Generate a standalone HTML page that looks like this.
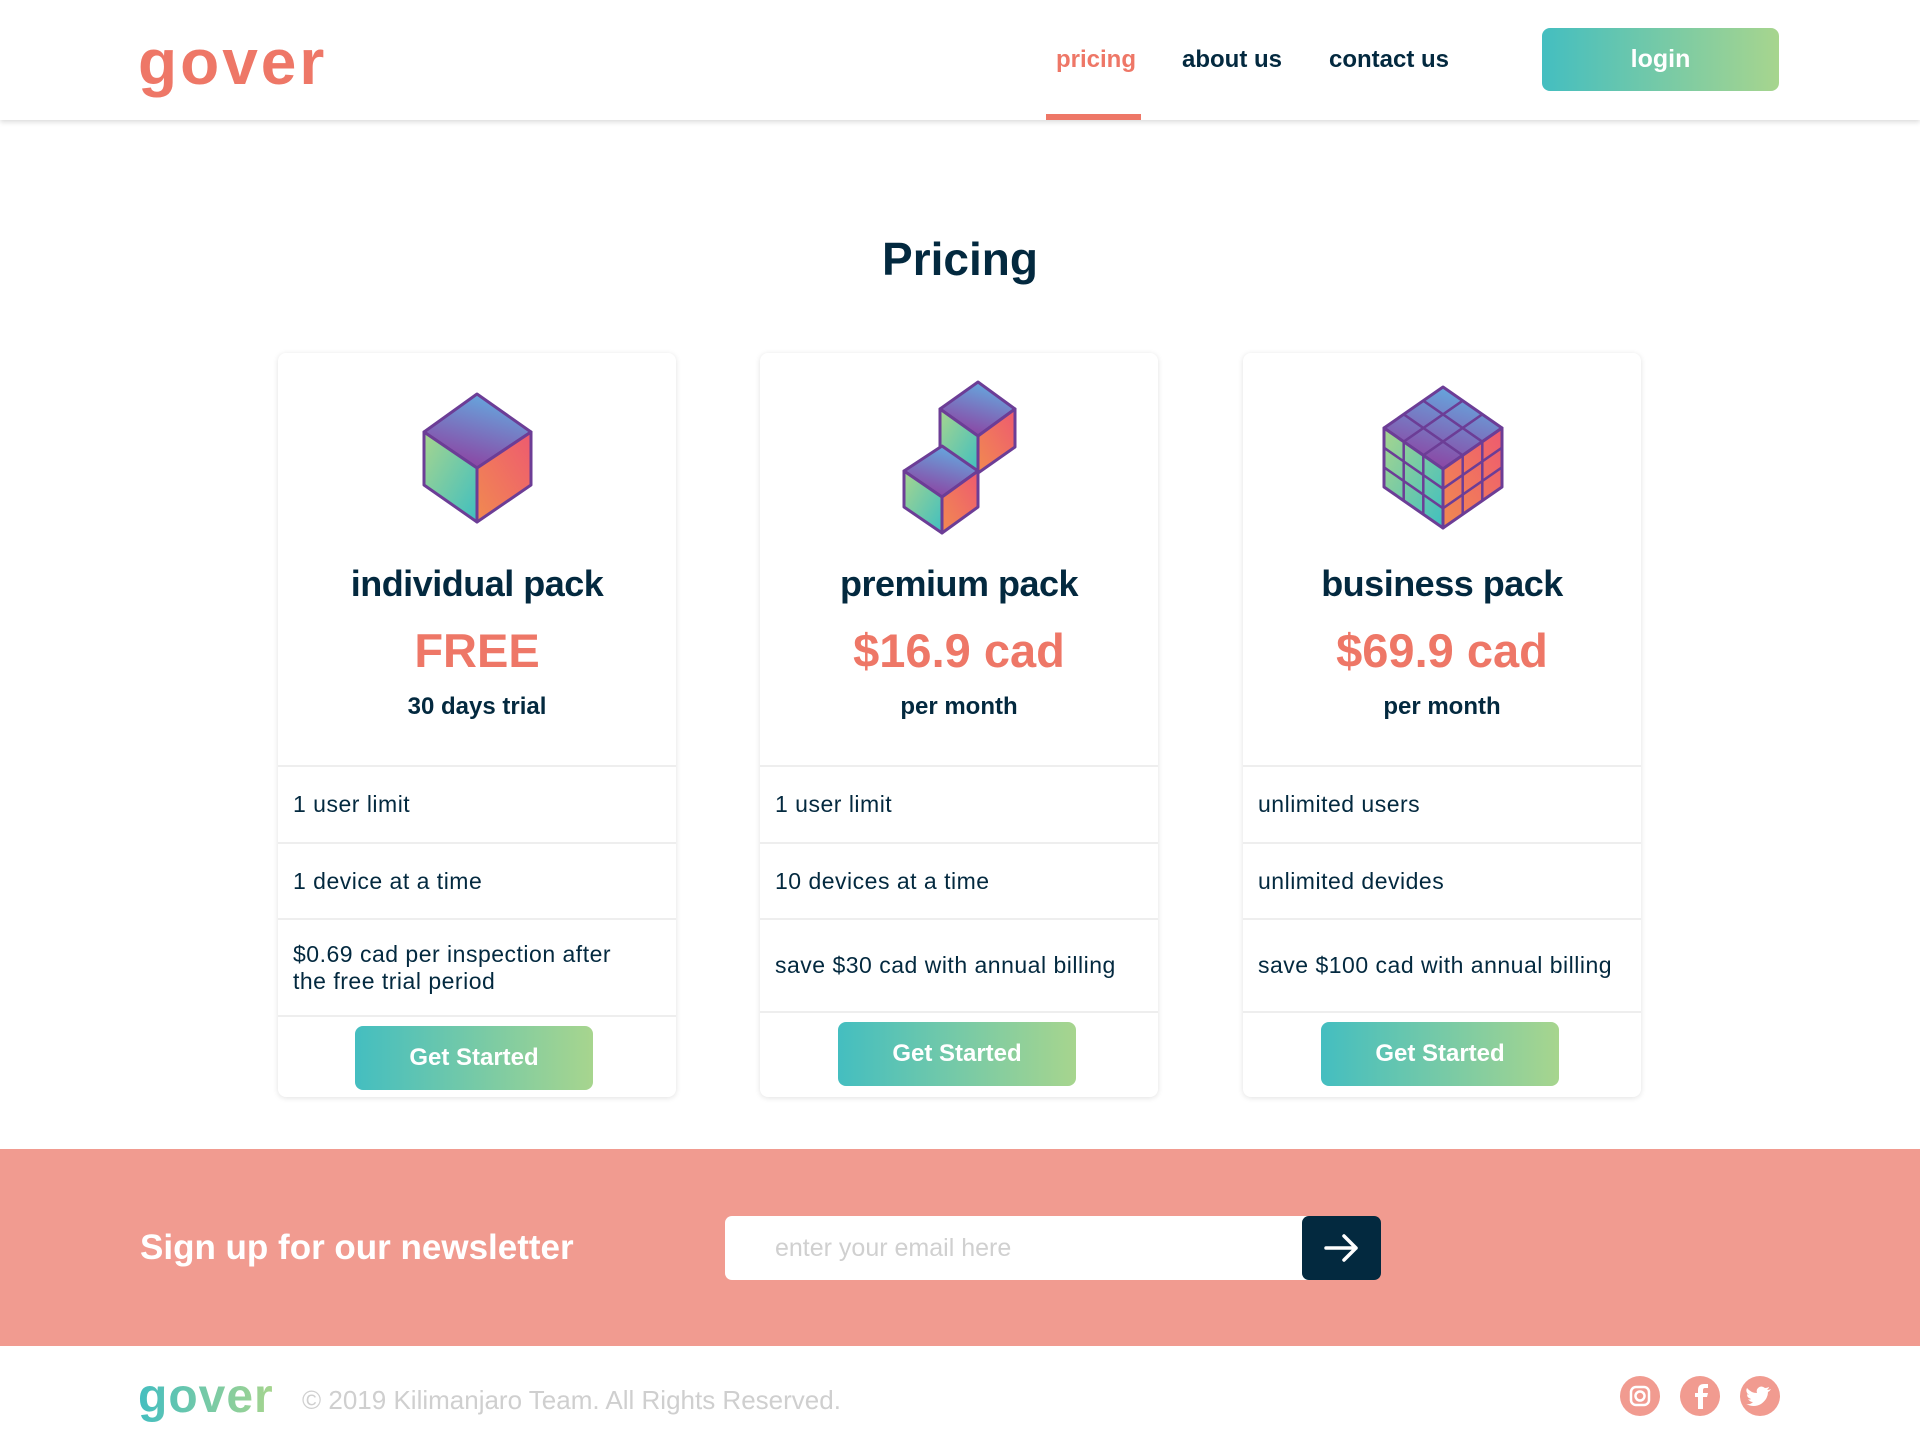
<!DOCTYPE html>
<html><head><meta charset="utf-8">
<style>
*{margin:0;padding:0;box-sizing:border-box}
body{width:1920px;height:1446px;position:relative;background:#fff;font-family:"Liberation Sans","DejaVu Sans",sans-serif;overflow:hidden;color:#03293f}
.a{position:absolute}
.hdr{left:0;top:0;width:1920px;height:120px;background:#fff;box-shadow:0 2px 5px rgba(0,0,0,.15);z-index:2}
.nav{font-size:24px;font-weight:bold;top:46px}
.grad{background:linear-gradient(90deg,#44bec0,#a7d58e)}
.btn{border-radius:8px;color:#fff;font-weight:bold;text-align:center}
.card{background:#fff;border-radius:8px;box-shadow:0 1px 6px rgba(0,0,0,.12);width:398px;top:353px;height:744px}
.card .t{position:absolute;left:0;width:100%;text-align:center}
.ttl{font-size:36px;font-weight:bold;letter-spacing:-0.5px}
.pr{font-size:47px;font-weight:bold;color:#ee7767}
.sub{font-size:24px;font-weight:bold}
.row{position:absolute;left:0;width:100%;border-top:2px solid #eee;padding-left:15px;font-size:23px;display:flex;align-items:center;letter-spacing:.5px;line-height:27px}
</style></head><body>
<div class="a hdr">
 <div class="a" style="left:138px;top:30px;font-size:64px;font-weight:bold;color:#ee7767;letter-spacing:3px;line-height:64px">gover</div>
 <div class="a nav" style="left:1056px;color:#ee7767">pricing</div>
 <div class="a nav" style="left:1182px">about us</div>
 <div class="a nav" style="left:1329px">contact us</div>
 <div class="a" style="left:1046px;top:114px;width:95px;height:6px;background:#ee7767"></div>
 <div class="a btn grad" style="left:1542px;top:28px;width:237px;height:63px;line-height:63px;font-size:25px">login</div>
</div>
<div class="a" style="left:0;width:1920px;top:232px;text-align:center;font-size:46px;font-weight:bold">Pricing</div>

<svg class="a" style="left:0;top:0;z-index:1" width="1920" height="600">
<defs>
<linearGradient id="gt" x1="1" y1="0" x2="0.6" y2="1"><stop offset="0" stop-color="#5eb8e8"/><stop offset="1" stop-color="#8a4aa6"/></linearGradient>
<linearGradient id="gl" x1="0" y1="0" x2="1" y2="1"><stop offset="0" stop-color="#a7d58e"/><stop offset="1" stop-color="#3fbfc0"/></linearGradient>
<linearGradient id="gr" x1="1" y1="0" x2="0" y2="1"><stop offset="0" stop-color="#ee5a70"/><stop offset="1" stop-color="#f18a50"/></linearGradient>
</defs>
<g stroke="#6c3d96" stroke-width="3" stroke-linejoin="round">
<polygon points="477,394 531,432 477,468 424,432" fill="url(#gt)"/>
<polygon points="424,432 477,468 477,522 424,485" fill="url(#gl)"/>
<polygon points="531,432 477,468 477,522 531,485" fill="url(#gr)"/>
<polygon points="978,382 1015,409 978,436 940,409" fill="url(#gt)"/>
<polygon points="940,409 978,436 978,473 940,447" fill="url(#gl)"/>
<polygon points="1015,409 978,436 978,473 1015,447" fill="url(#gr)"/>
<polygon points="942,446 978,471 942,497 904,471" fill="url(#gt)"/>
<polygon points="904,471 942,497 942,533 904,507" fill="url(#gl)"/>
<polygon points="978,471 942,497 942,533 978,507" fill="url(#gr)"/>
<polygon points="1443,387 1502,428 1443,469 1384,428" fill="url(#gt)"/>
<polygon points="1384,428 1443,469 1443,528 1384,487" fill="url(#gl)"/>
<polygon points="1502,428 1443,469 1443,528 1502,487" fill="url(#gr)"/>
<g fill="none" stroke-width="2.5">
<path d="M1423.3,400.7 L1482.3,441.7 M1403.7,414.3 L1462.7,455.3 M1462.7,400.7 L1403.7,441.7 M1482.3,414.3 L1423.3,455.3"/>
<path d="M1403.7,441.7 V500.7 M1423.3,455.3 V514.3 M1384,447.7 L1443,488.7 M1384,467.3 L1443,508.3"/>
<path d="M1462.7,455.3 V514.3 M1482.3,441.7 V500.7 M1502,447.7 L1443,488.7 M1502,467.3 L1443,508.3"/>
</g></g>
</svg>

<div class="a card" style="left:278px">
 <div class="t ttl" style="top:210px">individual pack</div>
 <div class="t pr" style="top:270px">FREE</div>
 <div class="t sub" style="top:340px">30 days trial</div>
 <div class="row" style="top:412px;height:77px">1 user limit</div>
 <div class="row" style="top:489px;height:76px">1 device at a time</div>
 <div class="row" style="top:565px;height:97px">$0.69 cad per inspection after<br>the free trial period</div>
 <div class="row" style="top:662px;height:82px;padding:0"></div>
 <div class="a btn grad" style="left:77px;top:673px;width:238px;height:64px;line-height:64px;font-size:24px">Get Started</div>
</div>
<div class="a card" style="left:760px">
 <div class="t ttl" style="top:210px">premium pack</div>
 <div class="t pr" style="top:270px">$16.9 cad</div>
 <div class="t sub" style="top:340px">per month</div>
 <div class="row" style="top:412px;height:77px">1 user limit</div>
 <div class="row" style="top:489px;height:76px">10 devices at a time</div>
 <div class="row" style="top:565px;height:93px">save $30 cad with annual billing</div>
 <div class="row" style="top:658px;height:86px;padding:0"></div>
 <div class="a btn grad" style="left:78px;top:669px;width:238px;height:64px;line-height:64px;font-size:24px">Get Started</div>
</div>
<div class="a card" style="left:1243px">
 <div class="t ttl" style="top:210px">business pack</div>
 <div class="t pr" style="top:270px">$69.9 cad</div>
 <div class="t sub" style="top:340px">per month</div>
 <div class="row" style="top:412px;height:77px">unlimited users</div>
 <div class="row" style="top:489px;height:76px">unlimited devides</div>
 <div class="row" style="top:565px;height:93px">save $100 cad with annual billing</div>
 <div class="row" style="top:658px;height:86px;padding:0"></div>
 <div class="a btn grad" style="left:78px;top:669px;width:238px;height:64px;line-height:64px;font-size:24px">Get Started</div>
</div>

<div class="a" style="left:0;top:1149px;width:1920px;height:197px;background:#f19b90"></div>
<div class="a" style="left:140px;top:1228px;font-size:35px;font-weight:bold;color:#fff">Sign up for our newsletter</div>
<div class="a" style="left:725px;top:1216px;width:600px;height:64px;background:#fff;border-radius:7px 0 0 7px"></div>
<div class="a" style="left:775px;top:1234px;font-size:25px;color:#d0d0d0">enter your email here</div>
<div class="a" style="left:1302px;top:1216px;width:79px;height:64px;background:#03293f;border-radius:7px">
 <svg width="79" height="64"><path d="M24 32 H54 M42 20 L54 32 L42 44" stroke="#fff" stroke-width="3.5" fill="none" stroke-linecap="round" stroke-linejoin="round"/></svg>
</div>

<div class="a" style="left:138px;top:1370px;font-size:48px;font-weight:bold;letter-spacing:1px;background:linear-gradient(90deg,#44bec0,#a7d58e);-webkit-background-clip:text;background-clip:text;color:transparent;line-height:54px">gover</div>
<div class="a" style="left:302px;top:1385px;font-size:26px;color:#cfcfcf">© 2019 Kilimanjaro Team. All Rights Reserved.</div>
<svg class="a" style="left:1620px;top:1376px" width="160" height="42">
 <circle cx="20" cy="20" r="20" fill="#f19b90"/>
 <rect x="11" y="11" width="18" height="18" rx="5" fill="none" stroke="#fff" stroke-width="2.5"/>
 <circle cx="20" cy="20" r="4.5" fill="none" stroke="#fff" stroke-width="2.5"/>
 <circle cx="80" cy="20" r="20" fill="#f19b90"/>
 <path d="M83 33 V21 H87 L88 17 H83 V14 Q83 12 85 12 H88 V8 H84 Q78 8 78 14 V17 H75 V21 H78 V33 Z" fill="#fff"/>
 <circle cx="140" cy="20" r="20" fill="#f19b90"/>
 <path d="M151 13 Q149 14 147 14 Q149 12 149 11 Q147 12 145 12 Q141 9 138 12 Q136 14 137 17 Q131 17 127 12 Q125 16 129 19 Q128 19 127 18 Q127 22 131 23 Q130 24 128 23 Q130 26 133 26 Q130 29 126 28 Q134 32 141 28 Q148 23 148 16 Q150 15 151 13Z" fill="#fff"/>
</svg>
</body></html>
